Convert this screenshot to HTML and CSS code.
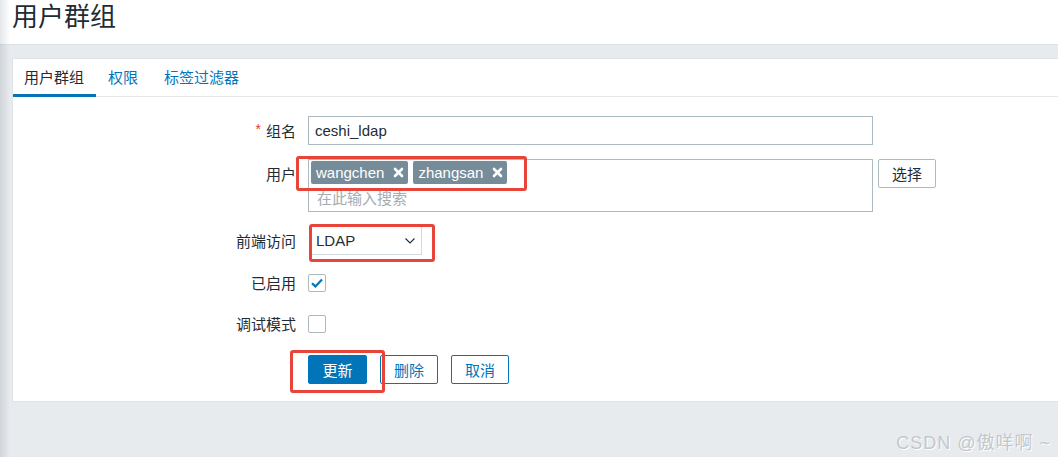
FILE: index.html
```html
<!DOCTYPE html>
<html lang="zh">
<head>
<meta charset="utf-8">
<title>用户群组</title>
<link rel="stylesheet" href="styles.css">
</head>
<body>
<div class="shade"></div>
<header class="page-header">
  <h1 class="page-title">用户群组</h1>
</header>
<main class="page-body">
  <section class="card">
    <nav class="tabs">
      <span class="tab tab-active">用户群组</span>
      <span class="tab">权限</span>
      <span class="tab">标签过滤器</span>
    </nav>
    <form class="form">
      <label class="lbl row-1"><span class="req">*</span>组名</label>
      <div class="ctl row-1"><div class="input">ceshi_ldap</div></div>

      <label class="lbl lbl-top row-2">用户</label>
      <div class="ctl ctl-top row-2">
        <div class="multi">
          <div class="tags">
            <span class="tag">wangchen<svg class="tag-x" width="11" height="11" viewBox="0 0 11 11"><path d="M2 2 L9 9 M9 2 L2 9" stroke="#ffffff" stroke-width="2.6" stroke-linecap="round"/></svg></span>
            <span class="tag">zhangsan<svg class="tag-x" width="11" height="11" viewBox="0 0 11 11"><path d="M2 2 L9 9 M9 2 L2 9" stroke="#ffffff" stroke-width="2.6" stroke-linecap="round"/></svg></span>
          </div>
          <div class="placeholder">在此输入搜索</div>
        </div>
        <span class="btn-alt">选择</span>
      </div>

      <label class="lbl row-3">前端访问</label>
      <div class="ctl row-3">
        <div class="select">LDAP
          <svg class="chev" width="10" height="6" viewBox="0 0 10 6"><path d="M0.5 0.5 L5 5 L9.5 0.5" fill="none" stroke="#1f2c33" stroke-width="1.1"/></svg>
        </div>
      </div>

      <label class="lbl row-4">已启用</label>
      <div class="ctl row-4">
        <span class="checkbox">
          <svg width="14" height="12" viewBox="0 0 14 12"><path d="M2 6.2 L5.4 9.4 L12 2.6" fill="none" stroke="#0275b8" stroke-width="2.2"/></svg>
        </span>
      </div>

      <label class="lbl row-5">调试模式</label>
      <div class="ctl row-5"><span class="checkbox"></span></div>

      <div class="spacer row-6"></div>
      <div class="ctl buttons row-6">
        <span class="btn btn-primary">更新</span>
        <span class="btn btn-secondary">删除</span>
        <span class="btn btn-secondary">取消</span>
      </div>
    </form>
  </section>
</main>
<div class="mark mark-1"></div>
<div class="mark mark-2"></div>
<div class="mark mark-3"></div>
<div class="watermark">CSDN @傲咩啊 ~</div>
</body>
</html>
```
FILE: styles.css
```css
html, body {
  margin: 0;
  padding: 0;
}
body {
  width: 1058px;
  height: 457px;
  overflow: hidden;
  background: #e8ebee;
  font-family: "Liberation Sans", "Noto Sans CJK SC", sans-serif;
  font-size: 15px;
  color: #1f2c33;
  position: relative;
}
.shade {
  position: absolute;
  left: 0;
  top: 0;
  width: 10px;
  height: 457px;
  background: linear-gradient(to right, rgba(60,80,95,0.14), rgba(60,80,95,0));
  z-index: 5;
}
.page-header {
  height: 45px;
  background: #ffffff;
  border-bottom: 1px solid #dde2e6;
  box-sizing: border-box;
  padding-left: 12px;
}
.page-title {
  margin: 0;
  font-weight: normal;
  font-size: 26px;
  line-height: 34px;
  color: #1f2c33;
}
.page-body {
  padding: 13px 0 0 12px;
}
.card {
  background: #ffffff;
  border: 1px solid #dfe4e7;
  border-right: none;
  height: 344px;
  box-sizing: border-box;
}
.tabs {
  display: flex;
  height: 38px;
  border-bottom: 1px solid #e4e8eb;
  box-sizing: border-box;
}
.tab {
  padding: 0 12px;
  line-height: 37px;
  color: #0275b8;
}
.tab-active {
  color: #1f2c33;
  border-bottom: 3px solid #0275b8;
  height: 38px;
  box-sizing: border-box;
  line-height: 37px;
  margin-bottom: -1px;
}
.tabs .tab:first-child {
  padding-left: 11px;
  padding-right: 12px;
}
.tabs .tab:nth-child(2) {
  padding-left: 12px;
  padding-right: 14px;
}
.form {
  display: grid;
  grid-template-columns: 283px 1fr;
  column-gap: 12px;
  row-gap: 14px;
  grid-template-rows: 29px 53px 29px 27px 27px 29px;
  padding-top: 19px;
}
.lbl {
  display: flex;
  align-items: center;
  justify-content: flex-end;
  white-space: nowrap;
}
.lbl-top {
  align-items: flex-start;
  padding-top: 4px;
}
.req {
  color: #e33734;
  margin-right: 5px;
  font-size: 14px;
  position: relative;
  top: -2px;
}
.ctl {
  display: flex;
  align-items: center;
}
.ctl-top {
  align-items: flex-start;
}
.input {
  width: 565px;
  height: 29px;
  box-sizing: border-box;
  border: 1px solid #acbbc2;
  padding: 0 6px;
  line-height: 27px;
}
.multi {
  width: 565px;
  height: 53px;
  box-sizing: border-box;
  border: 1px solid #acbbc2;
  padding: 1px 2px;
}
.tags {
  display: flex;
  gap: 5px;
}
.tag {
  display: inline-flex;
  align-items: center;
  height: 23px;
  background: #768d99;
  color: #ffffff;
  border-radius: 2px;
  padding: 0 4px 0 5px;
}
.tag-x {
  margin-left: 9px;
}
.placeholder {
  color: #a3adb3;
  padding-left: 6px;
  line-height: 24px;
  margin-top: 3px;
}
.btn-alt {
  margin-left: 5px;
  width: 58px;
  height: 29px;
  box-sizing: border-box;
  border: 1px solid #acbbc2;
  border-radius: 2px;
  display: flex;
  align-items: center;
  justify-content: center;
}
.select {
  width: 113px;
  height: 29px;
  box-sizing: border-box;
  border: 1px solid #d3dade;
  padding: 0 6px;
  margin-left: 1px;
  display: flex;
  align-items: center;
  justify-content: space-between;
}
.checkbox {
  width: 18px;
  height: 18px;
  box-sizing: border-box;
  border: 1px solid #acbbc2;
  border-radius: 2px;
  display: flex;
  align-items: center;
  justify-content: center;
}
.buttons {
  gap: 13px;
  padding-top: 4px;
  align-items: flex-start;
}
.btn {
  width: 59px;
  height: 29px;
  box-sizing: border-box;
  border-radius: 2px;
  display: flex;
  align-items: center;
  justify-content: center;
}
.btn-primary {
  background: #0275b8;
  color: #ffffff;
  border: 1px solid #0275b8;
}
.btn-secondary {
  width: 58px;
  background: #ffffff;
  color: #0275b8;
  border: 1px solid #0275b8;
}
.mark {
  position: absolute;
  border: 3px solid #e8443a;
  border-radius: 3px;
  box-sizing: border-box;
  z-index: 4;
}
.mark-1 { left: 296px; top: 156px; width: 231px; height: 35px; }
.mark-2 { left: 309px; top: 224px; width: 126px; height: 38px; }
.mark-3 { left: 290px; top: 350px; width: 95px; height: 43px; }
.watermark {
  position: absolute;
  right: 7px;
  top: 428px;
  font-size: 18px;
  letter-spacing: 1px;
  color: #c3c7cb;
  text-shadow: 1px 1px 0 #ffffff;
  z-index: 6;
}
```
